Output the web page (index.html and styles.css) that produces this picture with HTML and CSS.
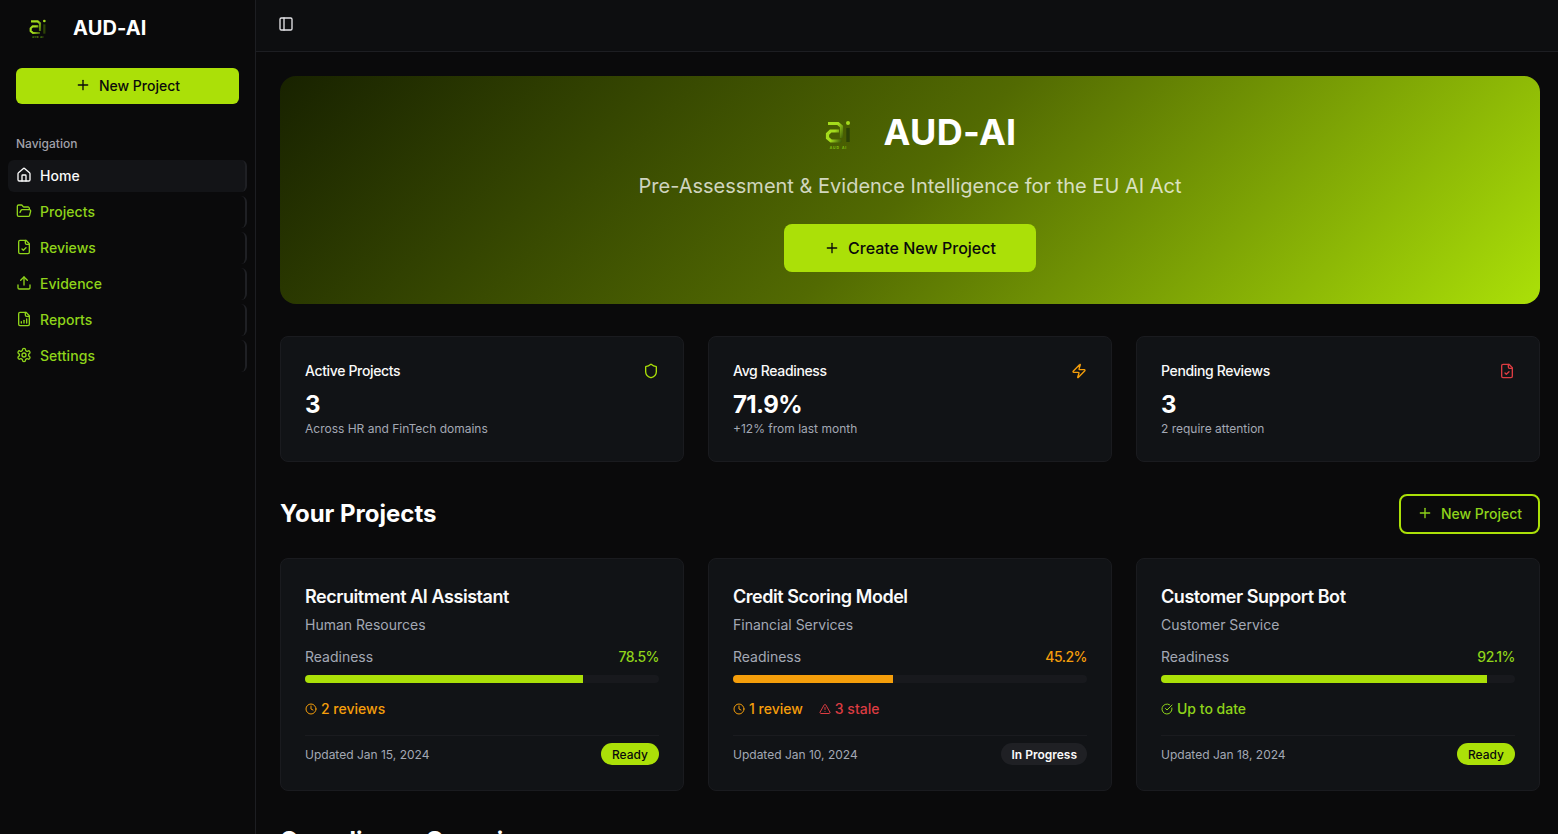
FILE: index.html
```html
<!DOCTYPE html>
<html lang="en">
  <head>
    <meta charset="utf-8" />
    <meta name="viewport" content="width=device-width, initial-scale=1.0" />
    <title>AUD-AI</title>
    <link rel="stylesheet" href="styles.css">
  </head>

  <body>
    <svg class="sprites" width="0" height="0">
      <defs>
        <linearGradient id="logo-fade" gradientUnits="userSpaceOnUse" x1="2" y1="8" x2="19" y2="16">
          <stop offset="0.45" stop-color="#a4dc1c" />
          <stop offset="1" stop-color="#3d5a08" />
        </linearGradient>
      </defs>
      <symbol id="i-plus" viewBox="0 0 24 24"><path d="M5 12h14" /><path d="M12 5v14" /></symbol>
      <symbol id="i-home" viewBox="0 0 24 24"><path d="M15 21v-8a1 1 0 0 0-1-1h-4a1 1 0 0 0-1 1v8" /><path d="M3 10a2 2 0 0 1 .709-1.528l7-5.999a2 2 0 0 1 2.582 0l7 5.999A2 2 0 0 1 21 10v9a2 2 0 0 1-2 2H5a2 2 0 0 1-2-2z" /></symbol>
      <symbol id="i-folder" viewBox="0 0 24 24"><path d="m6 14 1.5-2.9A2 2 0 0 1 9.24 10H20a2 2 0 0 1 1.94 2.5l-1.54 6a2 2 0 0 1-1.95 1.5H4a2 2 0 0 1-2-2V5a2 2 0 0 1 2-2h3.9a2 2 0 0 1 1.69.9l.81 1.2a2 2 0 0 0 1.67.9H18a2 2 0 0 1 2 2v2" /></symbol>
      <symbol id="i-filecheck" viewBox="0 0 24 24"><path d="M15 2H6a2 2 0 0 0-2 2v16a2 2 0 0 0 2 2h12a2 2 0 0 0 2-2V7Z" /><path d="M14 2v4a2 2 0 0 0 2 2h4" /><path d="m9 15 2 2 4-4" /></symbol>
      <symbol id="i-upload" viewBox="0 0 24 24"><path d="M21 15v4a2 2 0 0 1-2 2H5a2 2 0 0 1-2-2v-4" /><polyline points="17 8 12 3 7 8" /><line x1="12" x2="12" y1="3" y2="15" /></symbol>
      <symbol id="i-filechart" viewBox="0 0 24 24"><path d="M15 2H6a2 2 0 0 0-2 2v16a2 2 0 0 0 2 2h12a2 2 0 0 0 2-2V7Z" /><path d="M14 2v4a2 2 0 0 0 2 2h4" /><path d="M8 18v-2" /><path d="M12 18v-4" /><path d="M16 18v-6" /></symbol>
      <symbol id="i-settings" viewBox="0 0 24 24"><path d="M12.22 2h-.44a2 2 0 0 0-2 2v.18a2 2 0 0 1-1 1.73l-.43.25a2 2 0 0 1-2 0l-.15-.08a2 2 0 0 0-2.73.73l-.22.38a2 2 0 0 0 .73 2.73l.15.1a2 2 0 0 1 1 1.72v.51a2 2 0 0 1-1 1.74l-.15.09a2 2 0 0 0-.73 2.73l.22.38a2 2 0 0 0 2.73.73l.15-.08a2 2 0 0 1 2 0l.43.25a2 2 0 0 1 1 1.73V20a2 2 0 0 0 2 2h.44a2 2 0 0 0 2-2v-.18a2 2 0 0 1 1-1.73l.43-.25a2 2 0 0 1 2 0l.15.08a2 2 0 0 0 2.73-.73l.22-.39a2 2 0 0 0-.73-2.73l-.15-.08a2 2 0 0 1-1-1.74v-.5a2 2 0 0 1 1-1.74l.15-.09a2 2 0 0 0 .73-2.73l-.22-.38a2 2 0 0 0-2.73-.73l-.15.08a2 2 0 0 1-2 0l-.43-.25a2 2 0 0 1-1-1.73V4a2 2 0 0 0-2-2z" /><circle cx="12" cy="12" r="3" /></symbol>
      <symbol id="i-panel" viewBox="0 0 24 24"><rect x="3" y="3" width="18" height="18" rx="2" /><path d="M9 3v18" /></symbol>
      <symbol id="i-shield" viewBox="0 0 24 24"><path d="M20 13c0 5-3.5 7.5-7.66 8.95a1 1 0 0 1-.67-.01C7.5 20.5 4 18 4 13V6a1 1 0 0 1 1-1c2 0 4.5-1.2 6.24-2.72a1.17 1.17 0 0 1 1.52 0C14.51 3.81 17 5 19 5a1 1 0 0 1 1 1z" /></symbol>
      <symbol id="i-zap" viewBox="0 0 24 24"><path d="M4 14a1 1 0 0 1-.78-1.63l9.9-10.2a.5.5 0 0 1 .86.46l-1.92 6.02A1 1 0 0 0 13 10h7a1 1 0 0 1 .78 1.63l-9.9 10.2a.5.5 0 0 1-.86-.46l1.92-6.02A1 1 0 0 0 11 14z" /></symbol>
      <symbol id="i-clock" viewBox="0 0 24 24"><circle cx="12" cy="12" r="10" /><polyline points="12 6 12 12 16 14" /></symbol>
      <symbol id="i-alert" viewBox="0 0 24 24"><path d="m21.73 18-8-14a2 2 0 0 0-3.48 0l-8 14A2 2 0 0 0 4 21h16a2 2 0 0 0 1.73-3" /><path d="M12 9v4" /><path d="M12 17h.01" /></symbol>
      <symbol id="i-check" viewBox="0 0 24 24"><path d="M21.801 10A10 10 0 1 1 17 3.335" /><path d="m9 11 3 3L22 4" /></symbol>
      <symbol id="logo-mark" viewBox="0 0 27 30">
        <path class="logo-a" d="M3 3.5h10l3.5 3V18" />
        <path class="logo-a" d="M16.5 21H6l-3.5-3v-4l3-3H14" />
        <path class="logo-i" d="M23 8v14" />
        <circle class="logo-dot" cx="23" cy="3" r="2" />
        <text class="logo-word" x="13.5" y="29">AUD AI</text>
      </symbol>
    </svg>

    <aside class="sidebar">
      <div class="brand">
        <svg class="brand-logo"><use href="#logo-mark" /></svg>
        <span class="brand-name">AUD-AI</span>
      </div>
      <div class="sidebar-action">
        <button class="btn btn-solid">
          <svg class="icon"><use href="#i-plus" /></svg>
          New Project
        </button>
      </div>
      <div class="nav-label">Navigation</div>
      <nav class="nav">
        <a class="nav-item active"><svg class="icon"><use href="#i-home" /></svg>Home</a>
        <a class="nav-item"><svg class="icon"><use href="#i-folder" /></svg>Projects</a>
        <a class="nav-item"><svg class="icon"><use href="#i-filecheck" /></svg>Reviews</a>
        <a class="nav-item"><svg class="icon"><use href="#i-upload" /></svg>Evidence</a>
        <a class="nav-item"><svg class="icon"><use href="#i-filechart" /></svg>Reports</a>
        <a class="nav-item"><svg class="icon"><use href="#i-settings" /></svg>Settings</a>
      </nav>
    </aside>

    <div class="page">
      <header class="topbar">
        <svg class="icon topbar-toggle"><use href="#i-panel" /></svg>
      </header>

      <main class="content">
        <section class="hero">
          <div class="hero-title">
            <svg class="hero-logo"><use href="#logo-mark" /></svg>
            <h1>AUD-AI</h1>
          </div>
          <p class="hero-sub">Pre-Assessment &amp; Evidence Intelligence for the EU AI Act</p>
          <button class="btn btn-solid btn-large">
            <svg class="icon"><use href="#i-plus" /></svg>
            Create New Project
          </button>
        </section>

        <section class="grid stats">
          <div class="card stat">
            <div class="stat-head">
              <span>Active Projects</span>
              <svg class="icon lime"><use href="#i-shield" /></svg>
            </div>
            <div class="stat-value">3</div>
            <div class="stat-note">Across HR and FinTech domains</div>
          </div>
          <div class="card stat">
            <div class="stat-head">
              <span>Avg Readiness</span>
              <svg class="icon orange"><use href="#i-zap" /></svg>
            </div>
            <div class="stat-value">71.9%</div>
            <div class="stat-note">+12% from last month</div>
          </div>
          <div class="card stat">
            <div class="stat-head">
              <span>Pending Reviews</span>
              <svg class="icon red"><use href="#i-filecheck" /></svg>
            </div>
            <div class="stat-value">3</div>
            <div class="stat-note">2 require attention</div>
          </div>
        </section>

        <div class="section-head">
          <h2>Your Projects</h2>
          <button class="btn btn-outline">
            <svg class="icon"><use href="#i-plus" /></svg>
            New Project
          </button>
        </div>

        <section class="grid projects">
          <div class="card project">
            <h3>Recruitment AI Assistant</h3>
            <div class="project-domain">Human Resources</div>
            <div class="readiness">
              <span>Readiness</span>
              <span class="readiness-value text-lime">78.5%</span>
            </div>
            <div class="bar"><div class="bar-fill" style="width: 78.5%"></div></div>
            <div class="flags">
              <span class="flag orange"><svg class="icon-sm"><use href="#i-clock" /></svg>2 reviews</span>
            </div>
            <div class="project-foot">
              <span>Updated Jan 15, 2024</span>
              <span class="pill pill-ready">Ready</span>
            </div>
          </div>

          <div class="card project">
            <h3>Credit Scoring Model</h3>
            <div class="project-domain">Financial Services</div>
            <div class="readiness">
              <span>Readiness</span>
              <span class="readiness-value orange">45.2%</span>
            </div>
            <div class="bar"><div class="bar-fill bar-orange" style="width: 45.2%"></div></div>
            <div class="flags">
              <span class="flag orange"><svg class="icon-sm"><use href="#i-clock" /></svg>1 review</span>
              <span class="flag red"><svg class="icon-sm"><use href="#i-alert" /></svg>3 stale</span>
            </div>
            <div class="project-foot">
              <span>Updated Jan 10, 2024</span>
              <span class="pill pill-progress">In Progress</span>
            </div>
          </div>

          <div class="card project">
            <h3>Customer Support Bot</h3>
            <div class="project-domain">Customer Service</div>
            <div class="readiness">
              <span>Readiness</span>
              <span class="readiness-value text-lime">92.1%</span>
            </div>
            <div class="bar"><div class="bar-fill" style="width: 92.1%"></div></div>
            <div class="flags">
              <span class="flag text-lime"><svg class="icon-sm"><use href="#i-check" /></svg>Up to date</span>
            </div>
            <div class="project-foot">
              <span>Updated Jan 18, 2024</span>
              <span class="pill pill-ready">Ready</span>
            </div>
          </div>
        </section>

        <h2 class="section-title">Compliance Overview</h2>
      </main>
    </div>
  </body>
</html>
```

FILE: styles.css
```css
html {
  height: 100%;
  font-family: "Inter", "Liberation Sans", sans-serif;
}

body {
  height: 100vh;
  margin: 0;
  display: flex;
  overflow: hidden;
  background-color: #0a0a0b;
  color: #fafafa;
}

h1,
h2,
h3,
p {
  margin: 0;
}

.sprites {
  position: absolute;
}

symbol {
  fill: none;
  stroke: currentColor;
  stroke-width: 2;
  stroke-linecap: round;
  stroke-linejoin: round;
}

.icon {
  width: 16px;
  height: 16px;
  flex-shrink: 0;
}

.icon-sm {
  width: 12px;
  height: 12px;
  flex-shrink: 0;
}

.lime {
  color: #abe008;
}

.text-lime {
  color: #8fd41a;
}

.orange {
  color: #f59e0b;
}

.red {
  color: #dc3c42;
}

/* logo */
.logo-a {
  stroke: url(#logo-fade);
  stroke-width: 3.2;
  stroke-linecap: butt;
  stroke-linejoin: miter;
}

.logo-i {
  stroke: #2c4206;
  stroke-width: 3.4;
  stroke-linecap: butt;
}

.logo-dot {
  fill: #a4dc1c;
  stroke: none;
}

.logo-word {
  fill: #8ccf14;
  stroke: none;
  font-size: 3.4px;
  font-weight: 600;
  letter-spacing: 1px;
  text-anchor: middle;
}

/* buttons */
.btn {
  display: flex;
  align-items: center;
  justify-content: center;
  gap: 8px;
  padding: 0 0 2px;
  border: none;
  border-radius: 6px;
  font: inherit;
  font-size: 14px;
  font-weight: 500;
  cursor: pointer;
}

.btn-solid {
  background-color: #abe008;
  color: #0a0a0b;
  height: 36px;
  width: 100%;
}

.btn-large {
  width: 252px;
  height: 48px;
  padding: 0;
  font-size: 16px;
  border-radius: 8px;
}

.btn-outline {
  height: 40px;
  width: 141px;
  background: transparent;
  border: 2px solid #abe008;
  border-radius: 8px;
  color: #8fd41a;
}

/* sidebar */
.sidebar {
  width: 255px;
  flex-shrink: 0;
  border-right: 1px solid #1d1e22;
  background-color: #0a0a0b;
}

.brand {
  height: 56px;
  display: flex;
  align-items: center;
  gap: 26px;
  padding-left: 29px;
}

.brand-logo {
  width: 18px;
  height: 20px;
  margin-top: 2px;
}

.brand-name {
  font-size: 20px;
  font-weight: 700;
  letter-spacing: 0.1px;
  color: #fff;
}

.sidebar-action {
  padding: 12px 16px 0;
}

.btn-solid .icon {
  color: #0a0a0b;
}

.nav-label {
  margin-top: 28px;
  padding-left: 16px;
  font-size: 12px;
  font-weight: 500;
  line-height: 24px;
  color: #a1a1aa;
}

.nav {
  margin-top: 4px;
  padding: 0 8px;
  display: flex;
  flex-direction: column;
  gap: 4px;
}

.nav-item {
  box-sizing: border-box;
  height: 32px;
  display: flex;
  align-items: center;
  gap: 8px;
  padding: 0 0 2px 8px;
  border-right: 2px solid #1f2024;
  border-radius: 6px;
  font-size: 14px;
  font-weight: 500;
  letter-spacing: 0.05px;
  color: #8fd41a;
}

.nav-item.active {
  background-color: #131417;
  color: #fafafa;
}

/* main area */
.page {
  flex: 1;
  min-width: 0;
  display: flex;
  flex-direction: column;
}

.topbar {
  height: 51px;
  flex-shrink: 0;
  display: flex;
  align-items: center;
  padding-left: 22px;
  border-bottom: 1px solid #1d1e22;
  background-color: #0d0e10;
}

.topbar-toggle {
  color: #e4e4e7;
  margin-top: -3px;
}

.content {
  padding: 24px 18px 0 24px;
}

.hero {
  height: 228px;
  box-sizing: border-box;
  padding-top: 32px;
  border-radius: 16px;
  display: flex;
  flex-direction: column;
  align-items: center;
  background-image: linear-gradient(135deg, #182200 0%, #526a02 50%, #abe008 100%);
}

.hero-title {
  display: flex;
  align-items: center;
  height: 48px;
}

.hero-logo {
  width: 27px;
  height: 30px;
  margin: 6px 32px 0 21px;
}

.hero h1 {
  font-size: 36px;
  font-weight: 700;
  letter-spacing: 0.3px;
  color: #fff;
}

.hero-sub {
  margin-top: 16px;
  font-size: 20px;
  line-height: 28px;
  color: rgba(255, 255, 255, 0.75);
}

.hero .btn {
  margin-top: 24px;
}

.grid {
  display: grid;
  grid-template-columns: repeat(3, 1fr);
  gap: 24px;
}

.card {
  box-sizing: border-box;
  background-color: #111316;
  border: 1px solid #1a1b1f;
  border-radius: 8px;
}

.stats {
  margin-top: 32px;
}

.stat {
  height: 126px;
  padding: 24px;
}

.stat-head {
  display: flex;
  justify-content: space-between;
  align-items: center;
  font-size: 14px;
  font-weight: 500;
  line-height: 20px;
  letter-spacing: -0.025em;
  color: #fafafa;
}

.stat-value {
  margin-top: 8px;
  font-size: 24px;
  font-weight: 700;
  line-height: 32px;
  letter-spacing: -0.025em;
  color: #fff;
}

.stat-note {
  font-size: 12px;
  line-height: 16px;
  color: #a3a8b4;
}

.section-head {
  margin-top: 32px;
  height: 40px;
  display: flex;
  justify-content: space-between;
  align-items: center;
}

.section-head h2,
.section-title {
  font-size: 24px;
  font-weight: 700;
  color: #fff;
}

.section-head h2 {
  padding-bottom: 2px;
}

.projects {
  margin-top: 24px;
}

.project {
  height: 233px;
  padding: 24px;
}

.project h3 {
  font-size: 18px;
  font-weight: 600;
  line-height: 28px;
  letter-spacing: -0.025em;
  color: #fafafa;
}

.project-domain {
  margin-top: 4px;
  font-size: 14px;
  line-height: 20px;
  color: #a3a8b4;
}

.readiness {
  margin-top: 12px;
  display: flex;
  justify-content: space-between;
  font-size: 14px;
  line-height: 20px;
  color: #a3a8b4;
}

.readiness-value {
  font-weight: 500;
  letter-spacing: -0.5px;
}

.bar {
  margin-top: 8px;
  height: 8px;
  border-radius: 4px;
  background-color: #18191d;
  overflow: hidden;
}

.bar-fill {
  height: 100%;
  background-color: #abe008;
}

.bar-orange {
  background-color: #f59e0b;
}

.flags {
  margin-top: 16px;
  display: flex;
  gap: 16px;
  font-size: 14px;
  font-weight: 500;
  line-height: 20px;
}

.flag {
  display: flex;
  align-items: center;
  gap: 4px;
}

.project-foot {
  margin-top: 16px;
  padding-top: 7px;
  border-top: 1px solid #1a1b1f;
  display: flex;
  justify-content: space-between;
  align-items: center;
  font-size: 12px;
  color: #a3a8b4;
}

.pill {
  height: 22px;
  padding: 0 11px;
  display: flex;
  align-items: center;
  border-radius: 11px;
  font-size: 12px;
  font-weight: 500;
}

.pill-ready {
  background-color: #abe008;
  color: #0a0a0b;
}

.pill-progress {
  padding: 0 10px;
  background-color: #1f2024;
  color: #fafafa;
  font-weight: 600;
}

.section-title {
  margin-top: 35px;
}
```
